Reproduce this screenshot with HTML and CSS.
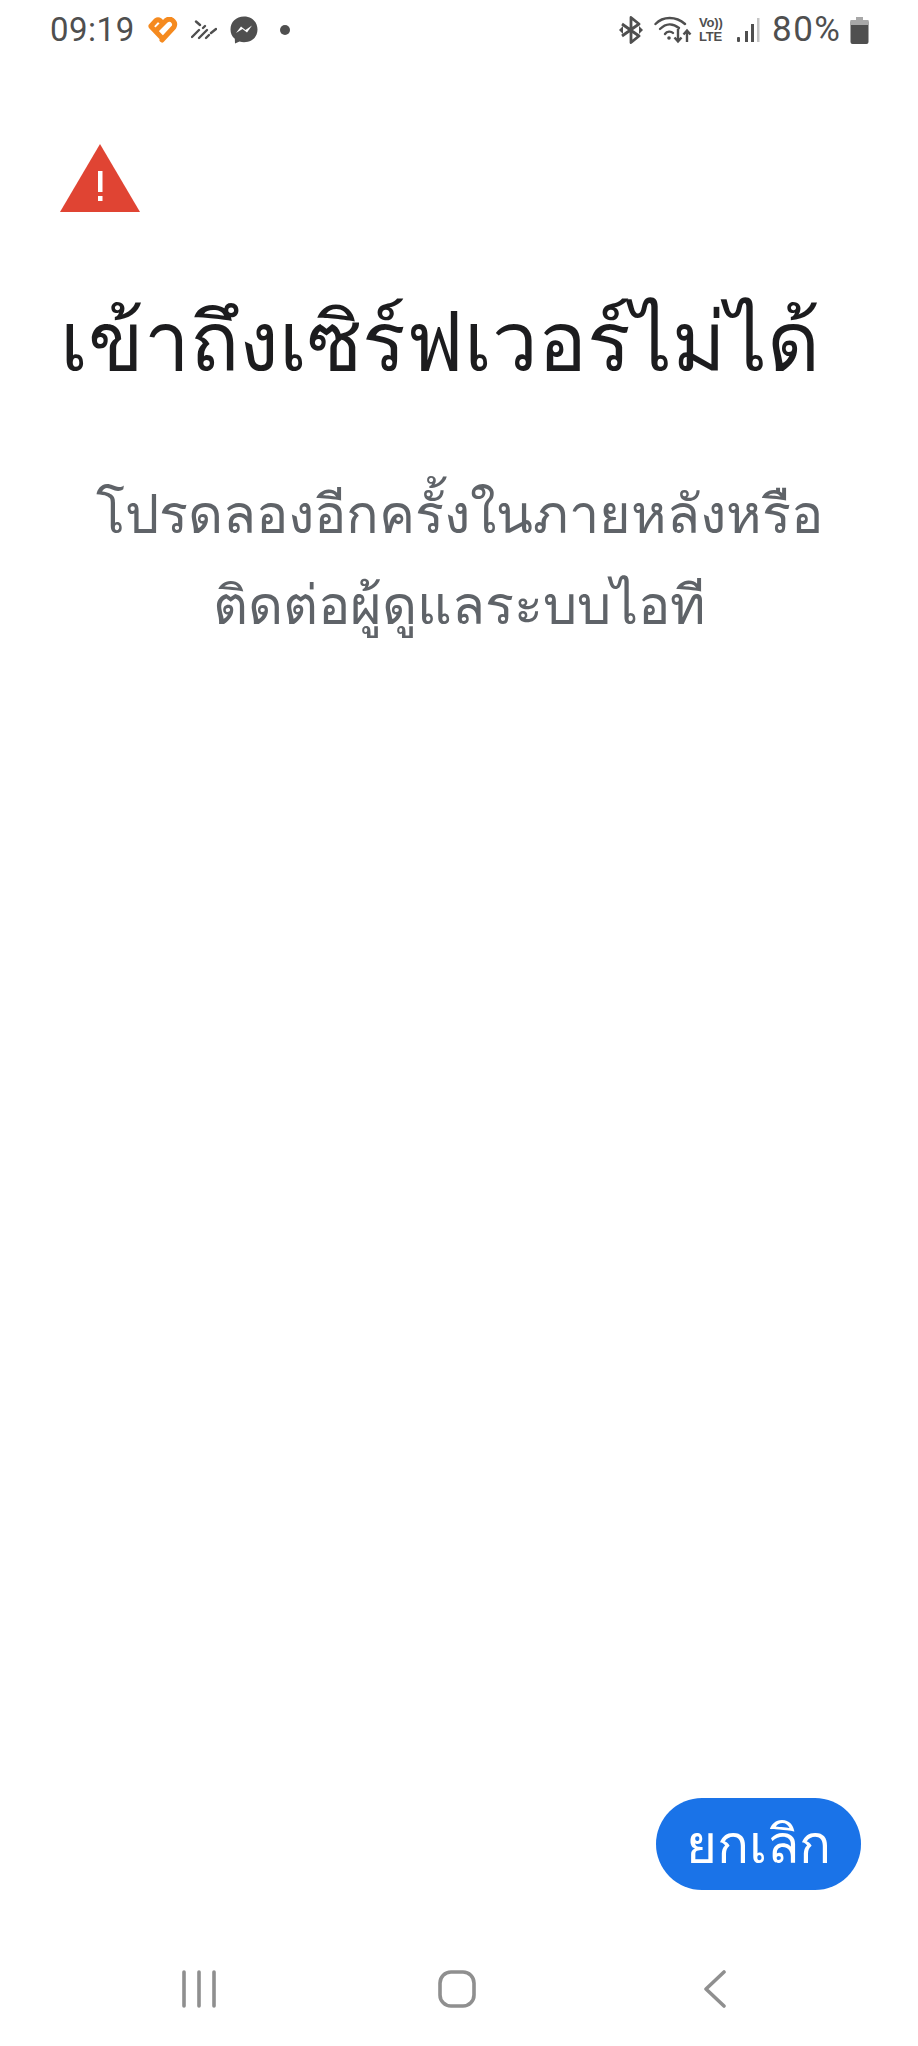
FILE: index.html
```html
<!DOCTYPE html>
<html lang="th">
<head>
<meta charset="utf-8">
<title>เข้าถึงเซิร์ฟเวอร์ไม่ได้</title>
<link rel="stylesheet" href="styles.css">
</head>
<body>
<div class="screen">
  <header class="status">
    <div class="status-left">
      <span class="time">09:19</span>
      <svg class="ic-heart" viewBox="0 0 30 26"><path d="M3 9 L8 3.5 Q10 2 12 3.5 L14.5 6 M3 9.5 L13 20 M9 12.5 L18 3.5 Q21 1 24 3 Q28 6 26 10 L14 23" fill="none" stroke="#f58a1f" stroke-width="5" stroke-linecap="round" stroke-linejoin="round"/></svg>
      <svg class="ic-lines" viewBox="0 0 26 20"><g stroke="#4f4f4f" stroke-width="2.4" stroke-linecap="round"><path d="M5 1.5 L9 5"/><path d="M1 17 L8 10"/><path d="M8 18 L16 10"/><path d="M15 18 L18 15"/><path d="M12 8 L14 6"/><path d="M20 13 L25 9"/></g></svg>
      <svg class="ic-msg" viewBox="0 0 28 28"><path d="M14 0.5 C6 0.5 0.5 6 0.5 13.5 C0.5 17.5 2 20.5 4.8 22.8 L5 27.5 L9.5 25.5 C11 26 12.5 26.2 14 26.2 C22 26.2 27.5 21 27.5 13.5 C27.5 6 22 0.5 14 0.5 Z" fill="#4f4f4f"/><path d="M6 17 L11 10.5 L15.5 14 L22 9.5 L17 16.5 L12.5 13 Z" fill="#fff"/></svg>
      <span class="dot"></span>
    </div>
    <div class="status-right">
      <svg class="ic-bt" viewBox="0 0 24 28"><path d="M3 8 L20 20 L12 26.5 V1.5 L20 8 L3 20" fill="none" stroke="#4f4f4f" stroke-width="2.8" stroke-linejoin="round"/><path d="M0 14 L4 10 V18 Z M24 14 L20 10 V18 Z" fill="#4f4f4f"/></svg>
      <svg class="ic-wifi" viewBox="0 0 38 28"><g fill="none" stroke="#4f4f4f" stroke-width="2.4" stroke-linecap="round"><path d="M1.5 8 C9 0 22 0 31 8"/><path d="M6 13 C12 7 19 7 25 12"/><path d="M11 18 C13 15 17 15 19 17"/></g><circle cx="15" cy="22" r="1.8" fill="#4f4f4f"/><path d="M24 13 V25 M20.5 21.5 L24 25.5 L27.5 21.5 M33 26 V15 M29.5 18.5 L33 14.5 L36.5 18.5" fill="none" stroke="#4f4f4f" stroke-width="2.4"/></svg>
      <span class="volte"><span>Vo))</span><span>LTE</span></span>
      <svg class="ic-signal" viewBox="0 0 24 26"><g fill="#4f4f4f"><rect x="1" y="20" width="3" height="5" rx="1"/><rect x="9" y="14" width="3" height="11"/><rect x="15" y="7" width="3" height="18"/></g><rect x="21" y="1" width="2.5" height="24" fill="#c4c4c4"/></svg>
      <span class="pct">80%</span>
      <svg class="ic-batt" viewBox="0 0 18 27"><path d="M5.5 0.5 H12.5 V3 H16 Q18 3 18 5 V25 Q18 27 16 27 H2 Q0 27 0 25 V5 Q0 3 2 3 H5.5 Z" fill="#4f4f4f"/><rect x="0" y="3" width="18" height="5" fill="#a8a8a8"/><rect x="5.5" y="0.5" width="7" height="3" fill="#a8a8a8"/></svg>
    </div>
  </header>

  <main class="content">
    <svg class="warn" viewBox="0 0 80 68">
      <path d="M40 0 L80 68 H0 Z" fill="#e04433"/>
      <rect x="38" y="27" width="4.5" height="21" fill="#fff"/>
      <rect x="38" y="52" width="4.5" height="5" fill="#fff"/>
    </svg>
    <h1 class="title">เข้าถึงเซิร์ฟเวอร์ไม่ได้</h1>
    <p class="message">โปรดลองอีกครั้งในภายหลังหรือ<br>ติดต่อผู้ดูแลระบบไอที</p>
  </main>

  <div class="actions">
    <button class="cancel" type="button">ยกเลิก</button>
  </div>

  <nav class="navbar">
    <svg class="nav-recent" viewBox="0 0 34 38"><g stroke="#8f8f8f" stroke-width="3.6" stroke-linecap="round"><path d="M2 2 V36"/><path d="M17 2 V36"/><path d="M32 2 V36"/></g></svg>
    <svg class="nav-home" viewBox="0 0 38 38"><rect x="2" y="2" width="34" height="34" rx="11" fill="none" stroke="#8f8f8f" stroke-width="3.6"/></svg>
    <svg class="nav-back" viewBox="0 0 22 38"><path d="M20 2 L2 19 L20 36" fill="none" stroke="#8f8f8f" stroke-width="3.6" stroke-linecap="round" stroke-linejoin="round"/></svg>
  </nav>
</div>
</body>
</html>
```

FILE: styles.css
```css
* { box-sizing: border-box; }
html, body { margin: 0; padding: 0; background: #fff; }
body { font-family: "Noto Sans", "Liberation Sans", Roboto, sans-serif; }

.screen {
  width: 918px;
  height: 2046px;
  display: flex;
  flex-direction: column;
  overflow: hidden;
}

.status {
  height: 60px;
  flex: none;
  display: flex;
  justify-content: space-between;
  align-items: center;
  padding: 0 49px 0 50px;
  color: #4f4f4f;
}
.status-left, .status-right { display: flex; align-items: center; }
.time { font-family: Roboto, sans-serif; font-size: 33px; line-height: 36px; letter-spacing: 0.5px; width: 98px; }
.ic-heart { width: 30px; height: 26px; }
.ic-lines { width: 26px; height: 20px; margin-left: 13px; }
.ic-msg { width: 28px; height: 28px; margin-left: 13px; }
.dot { width: 10px; height: 10px; border-radius: 50%; background: #4f4f4f; margin-left: 22px; }

.ic-bt { width: 24px; height: 28px; }
.ic-wifi { width: 38px; height: 28px; margin-left: 11px; }
.volte {
  display: flex; flex-direction: column; width: 28px; margin-left: 7px;
  font-family: "Liberation Sans", sans-serif; font-weight: 700; font-size: 13px; line-height: 14px; letter-spacing: -0.2px;
}
.ic-signal { width: 24px; height: 26px; margin-left: 9px; }
.pct { font-family: Roboto, sans-serif; font-size: 35px; line-height: 36px; letter-spacing: 1.5px; margin-left: 12px; width: 78px; }
.ic-batt { width: 19px; height: 27px; }

.content { flex: 1; display: flex; flex-direction: column; padding: 84px 60px 0; }
.warn { width: 80px; height: 68px; flex: none; }
.title {
  margin: 67px 0 0;
  font-size: 81.5px;
  line-height: 120px;
  font-weight: 400;
  color: #1c1c1e;
  white-space: nowrap;
}
.message {
  margin: 68px 0 0;
  font-size: 54px;
  line-height: 91px;
  text-align: center;
  color: #5f6368;
  white-space: nowrap;
}

.actions { flex: none; display: flex; justify-content: flex-end; padding: 0 57px 0 0; }
.cancel {
  width: 205px;
  height: 92px;
  border: 0;
  border-radius: 46px;
  background: #1a73e8;
  color: #fff;
  font-family: inherit;
  font-size: 53px;
  padding: 0;
}

.navbar {
  flex: none;
  height: 156px;
  display: flex;
  align-items: flex-start;
  padding-top: 80px;
}
.navbar svg { height: 38px; flex: none; }
.nav-recent { width: 34px; margin-left: 182px; }
.nav-home { width: 38px; margin-left: 222px; }
.nav-back { width: 22px; margin-left: 228px; }
```
